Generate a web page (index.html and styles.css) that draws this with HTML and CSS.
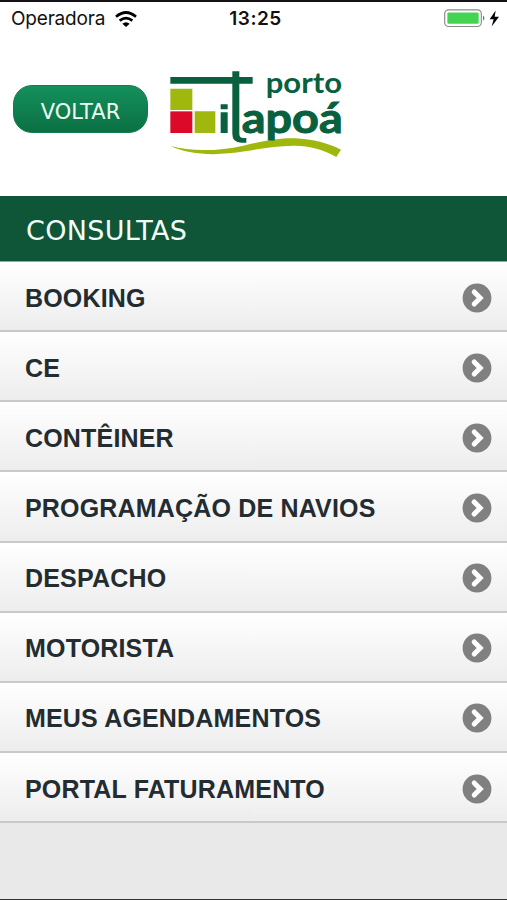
FILE: index.html
```html
<!DOCTYPE html>
<html lang="pt-BR">
<head>
<meta charset="utf-8">
<title>Porto Itapoá</title>
<link rel="stylesheet" href="styles.css">
</head>
<body>
<svg class="symbols" aria-hidden="true">
  <symbol id="chevron" viewBox="0 0 30 30">
    <circle cx="15" cy="15" r="14.4" fill="#808080"/>
    <path d="M12.2 9 18.2 15 12.2 21" fill="none" stroke="#fff" stroke-width="5" stroke-linecap="round" stroke-linejoin="miter"/>
  </symbol>
</svg>
<div class="status">
  <div class="carrier"><span class="carrier-name">Operadora</span>
    <svg class="wifi" viewBox="0 0 66 48"><g fill="none" stroke="#000" stroke-width="8"><path d="M3 17Q33-8 63 17"/><path d="M14 29Q33 14 52 29"/></g><path d="M22 38Q33 29 44 38L33 48Z"/></svg>
  </div>
  <time>13:25</time>
  <svg class="battery" viewBox="0 0 168 56"><rect x="2" y="2" width="110" height="50" rx="12" fill="#fff" stroke="#8b8b8b" stroke-width="3.5"/><rect x="10" y="10" width="94" height="34" rx="4" fill="#43d551"/><path d="M117 19Q126 27 117 35Z" fill="#777"/><path d="M155 4 137 30H149L143 52 165 23H152Z" fill="#000"/></svg>
</div>
<header>
  <button class="back">VOLTAR</button>
  <svg class="logo" viewBox="0 0 570 315" role="img" aria-label="Porto Itapoá">
    <path d="M31 86H97V150H31ZM104 154H166V219H104Z" fill="#a0b80d"/>
    <path d="M31 154H97V219H31Z" fill="#dc0929"/>
    <path d="M32 258C90 274 170 275 250 257C320 241 360 234 405 235C460 237 505 250 543 269L529 291C490 268 445 256 400 257C350 258 310 264 255 274C165 289 85 284 32 258Z" fill="#a0b80d"/>
    <path d="M31 51H217V34H238V51H278V71H238V222Q238 234 250 234H259V248H244Q217 248 217 222V71H31Z" fill="#08603e"/>
    <path d="M182 133H203V148H182ZM182 157H203V219H182Z" fill="#08603e"/>
    <g class="logo-text">
      <text x="317" y="98" font-size="87" textLength="229" lengthAdjust="spacingAndGlyphs">porto</text>
      <text class="strong" x="245" y="219" font-size="126" textLength="303" lengthAdjust="spacingAndGlyphs">apoá</text>
    </g>
  </svg>
</header>
<h1>CONSULTAS</h1>
<ul>
  <li><span>BOOKING</span><svg><use href="#chevron"/></svg></li>
  <li><span>CE</span><svg><use href="#chevron"/></svg></li>
  <li><span>CONTÊINER</span><svg><use href="#chevron"/></svg></li>
  <li><span>PROGRAMAÇÃO DE NAVIOS</span><svg><use href="#chevron"/></svg></li>
  <li><span>DESPACHO</span><svg><use href="#chevron"/></svg></li>
  <li><span>MOTORISTA</span><svg><use href="#chevron"/></svg></li>
  <li><span>MEUS AGENDAMENTOS</span><svg><use href="#chevron"/></svg></li>
  <li><span>PORTAL FATURAMENTO</span><svg><use href="#chevron"/></svg></li>
</ul>
</body>
</html>
```
FILE: styles.css
```css
* { box-sizing: border-box; }
body {
  margin: 0;
  height: 900px;
  overflow: hidden;
  background: #e9e9e9;
  border-top: 2px solid #141216;
  border-bottom: 1px solid #333;
  font-family: "Liberation Sans", Arial, sans-serif;
}
.symbols { display: none; }
.status {
  display: grid;
  grid-template-columns: 1fr auto 1fr;
  align-items: center;
  height: 33px;
  padding: 0 7px 0 11px;
  background: #fff;
  color: #111;
  font: 19px/32px Inter, sans-serif;
}
.carrier { display: flex; align-items: center; gap: 10px; }
.carrier-name { letter-spacing: -.2px; }
.wifi { width: 22px; height: 16px; }
.status time { font-weight: 600; letter-spacing: .5px; }
.battery { width: 56px; height: 19px; justify-self: end; }
header {
  display: flex;
  height: 161px;
  padding: 25px 13px 0;
  background: #fff;
}
.back {
  width: 135px;
  height: 48px;
  margin-top: 25px;
  padding: 5px 0 0;
  border: 1px solid #167a50;
  border-radius: 19px;
  background: linear-gradient(#14905c, #0b7045);
  color: #edfff4;
  font: 21px "DejaVu Sans", sans-serif;
}
.logo { width: 190px; height: 105px; margin-left: 12px; }
.logo-text { fill: #08603e; font-family: Lato, sans-serif; font-weight: 700; }
.logo-text .strong { stroke: #08603e; stroke-width: 3; }
h1 {
  margin: 0;
  height: 66px;
  padding: 3px 26px 0;
  border-bottom: 1px solid #9aa8a0;
  background: #0f5537;
  color: #f3fff9;
  font: 27px/64px "DejaVu Sans", sans-serif;
  letter-spacing: .3px;
}
ul { margin: 0; padding: 0; list-style: none; }
li {
  display: flex;
  align-items: center;
  justify-content: space-between;
  height: 70.15px;
  padding: 3px 15px 0 25px;
  border-bottom: 2px solid #c9c9c9;
  background: linear-gradient(#fff, #ededed);
  color: #232c30;
  font-weight: bold;
  font-size: 25px;
  letter-spacing: .18px;
}
li span { padding-top: 1px; }
li svg { width: 30px; height: 30px; }
```
